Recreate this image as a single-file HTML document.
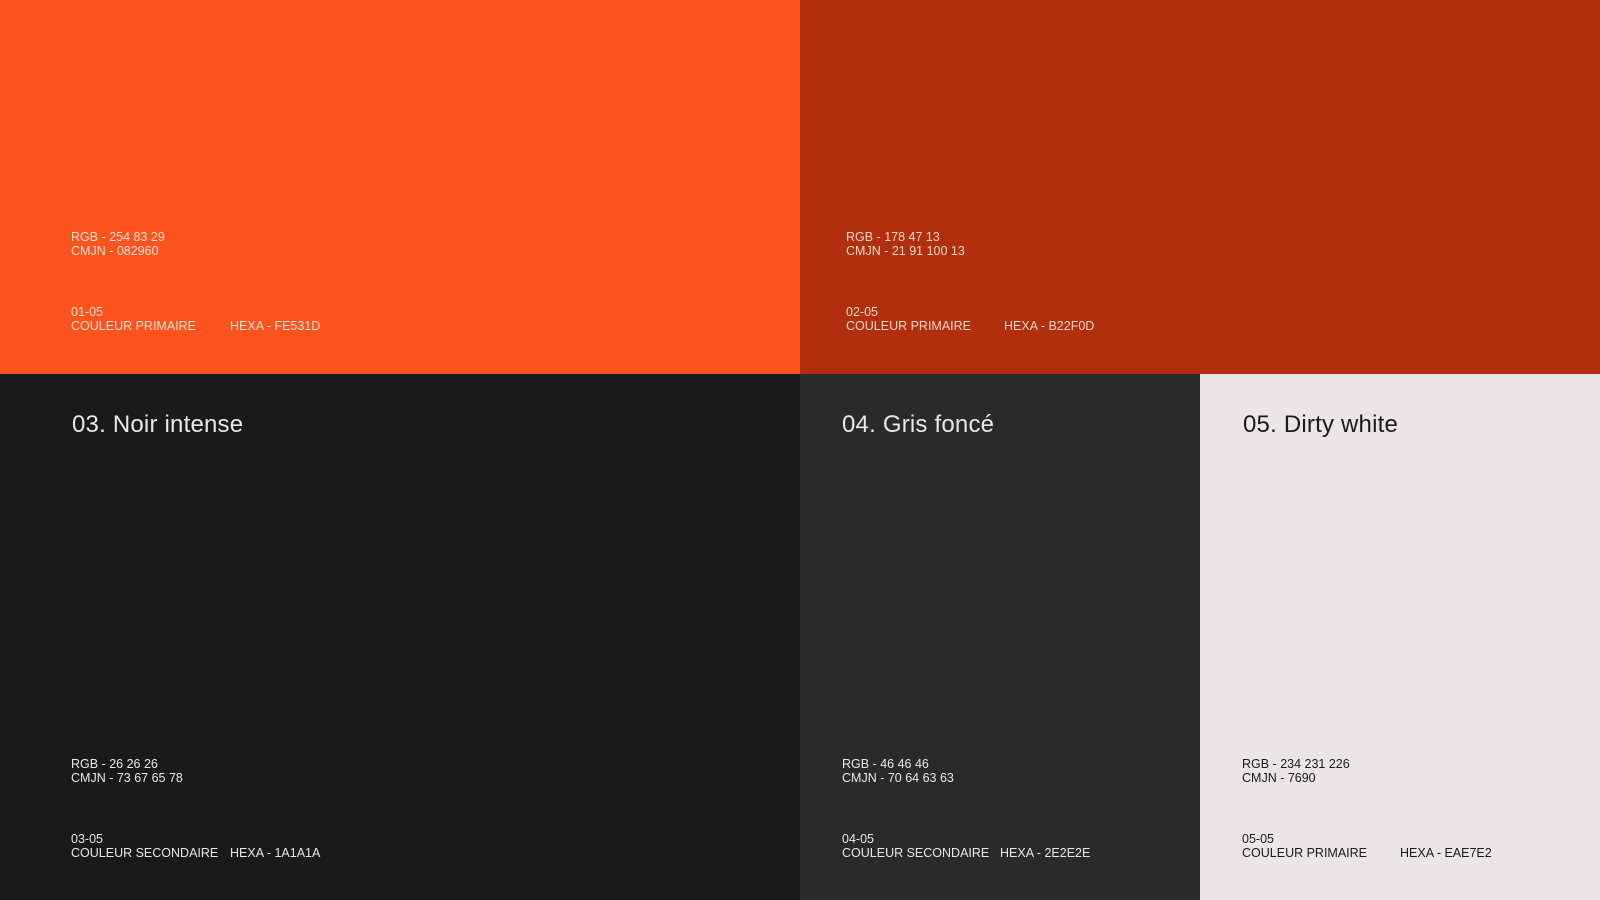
<!DOCTYPE html>
<html><head><meta charset="utf-8"><style>
*{margin:0;padding:0;box-sizing:border-box}
body{width:1600px;height:900px;position:relative;overflow:hidden;font-family:"Liberation Sans",sans-serif}
.p{position:absolute}
.t{position:absolute;font-size:12.5px;line-height:14.3px;white-space:nowrap}
.h{position:absolute;font-size:24px;line-height:28px;white-space:nowrap;letter-spacing:0.2px}
</style></head><body>
<div class="p" style="left:0;top:0;width:800px;height:374px;background:#FE531D"></div>
<div class="p" style="left:800px;top:0;width:800px;height:374px;background:#B22F0D"></div>
<div class="p" style="left:0;top:374px;width:800px;height:526px;background:#1A1A1A"></div>
<div class="p" style="left:800px;top:374px;width:400px;height:526px;background:#2A2A2A"></div>
<div class="p" style="left:1200px;top:374px;width:400px;height:526px;background:#EDE5E5"></div>

<div style="color:#fde2d6">
<div class="t" style="left:71px;top:230px">RGB - 254 83 29<br>CMJN - 082960</div>
<div class="t" style="left:71px;top:305px">01-05<br>COULEUR PRIMAIRE</div>
<div class="t" style="left:230px;top:319px">HEXA - FE531D</div>
</div>
<div style="color:#f4d6cc">
<div class="t" style="left:846px;top:230px">RGB - 178 47 13<br>CMJN - 21 91 100 13</div>
<div class="t" style="left:846px;top:305px">02-05<br>COULEUR PRIMAIRE</div>
<div class="t" style="left:1004px;top:319px">HEXA - B22F0D</div>
</div>
<div style="color:#e8e8e8">
<div class="h" style="left:72px;top:411px">03. Noir intense</div>
<div class="t" style="left:71px;top:757px">RGB - 26 26 26<br>CMJN - 73 67 65 78</div>
<div class="t" style="left:71px;top:832px">03-05<br>COULEUR SECONDAIRE</div>
<div class="t" style="left:230px;top:846px">HEXA - 1A1A1A</div>
</div>
<div style="color:#e8e8e8">
<div class="h" style="left:842px;top:411px">04. Gris foncé</div>
<div class="t" style="left:842px;top:757px">RGB - 46 46 46<br>CMJN - 70 64 63 63</div>
<div class="t" style="left:842px;top:832px">04-05<br>COULEUR SECONDAIRE</div>
<div class="t" style="left:1000px;top:846px">HEXA - 2E2E2E</div>
</div>
<div style="color:#1a1a1a">
<div class="h" style="left:1243px;top:411px">05. Dirty white</div>
<div class="t" style="left:1242px;top:757px">RGB - 234 231 226<br>CMJN - 7690</div>
<div class="t" style="left:1242px;top:832px">05-05<br>COULEUR PRIMAIRE</div>
<div class="t" style="left:1400px;top:846px">HEXA - EAE7E2</div>
</div>
</body></html>
